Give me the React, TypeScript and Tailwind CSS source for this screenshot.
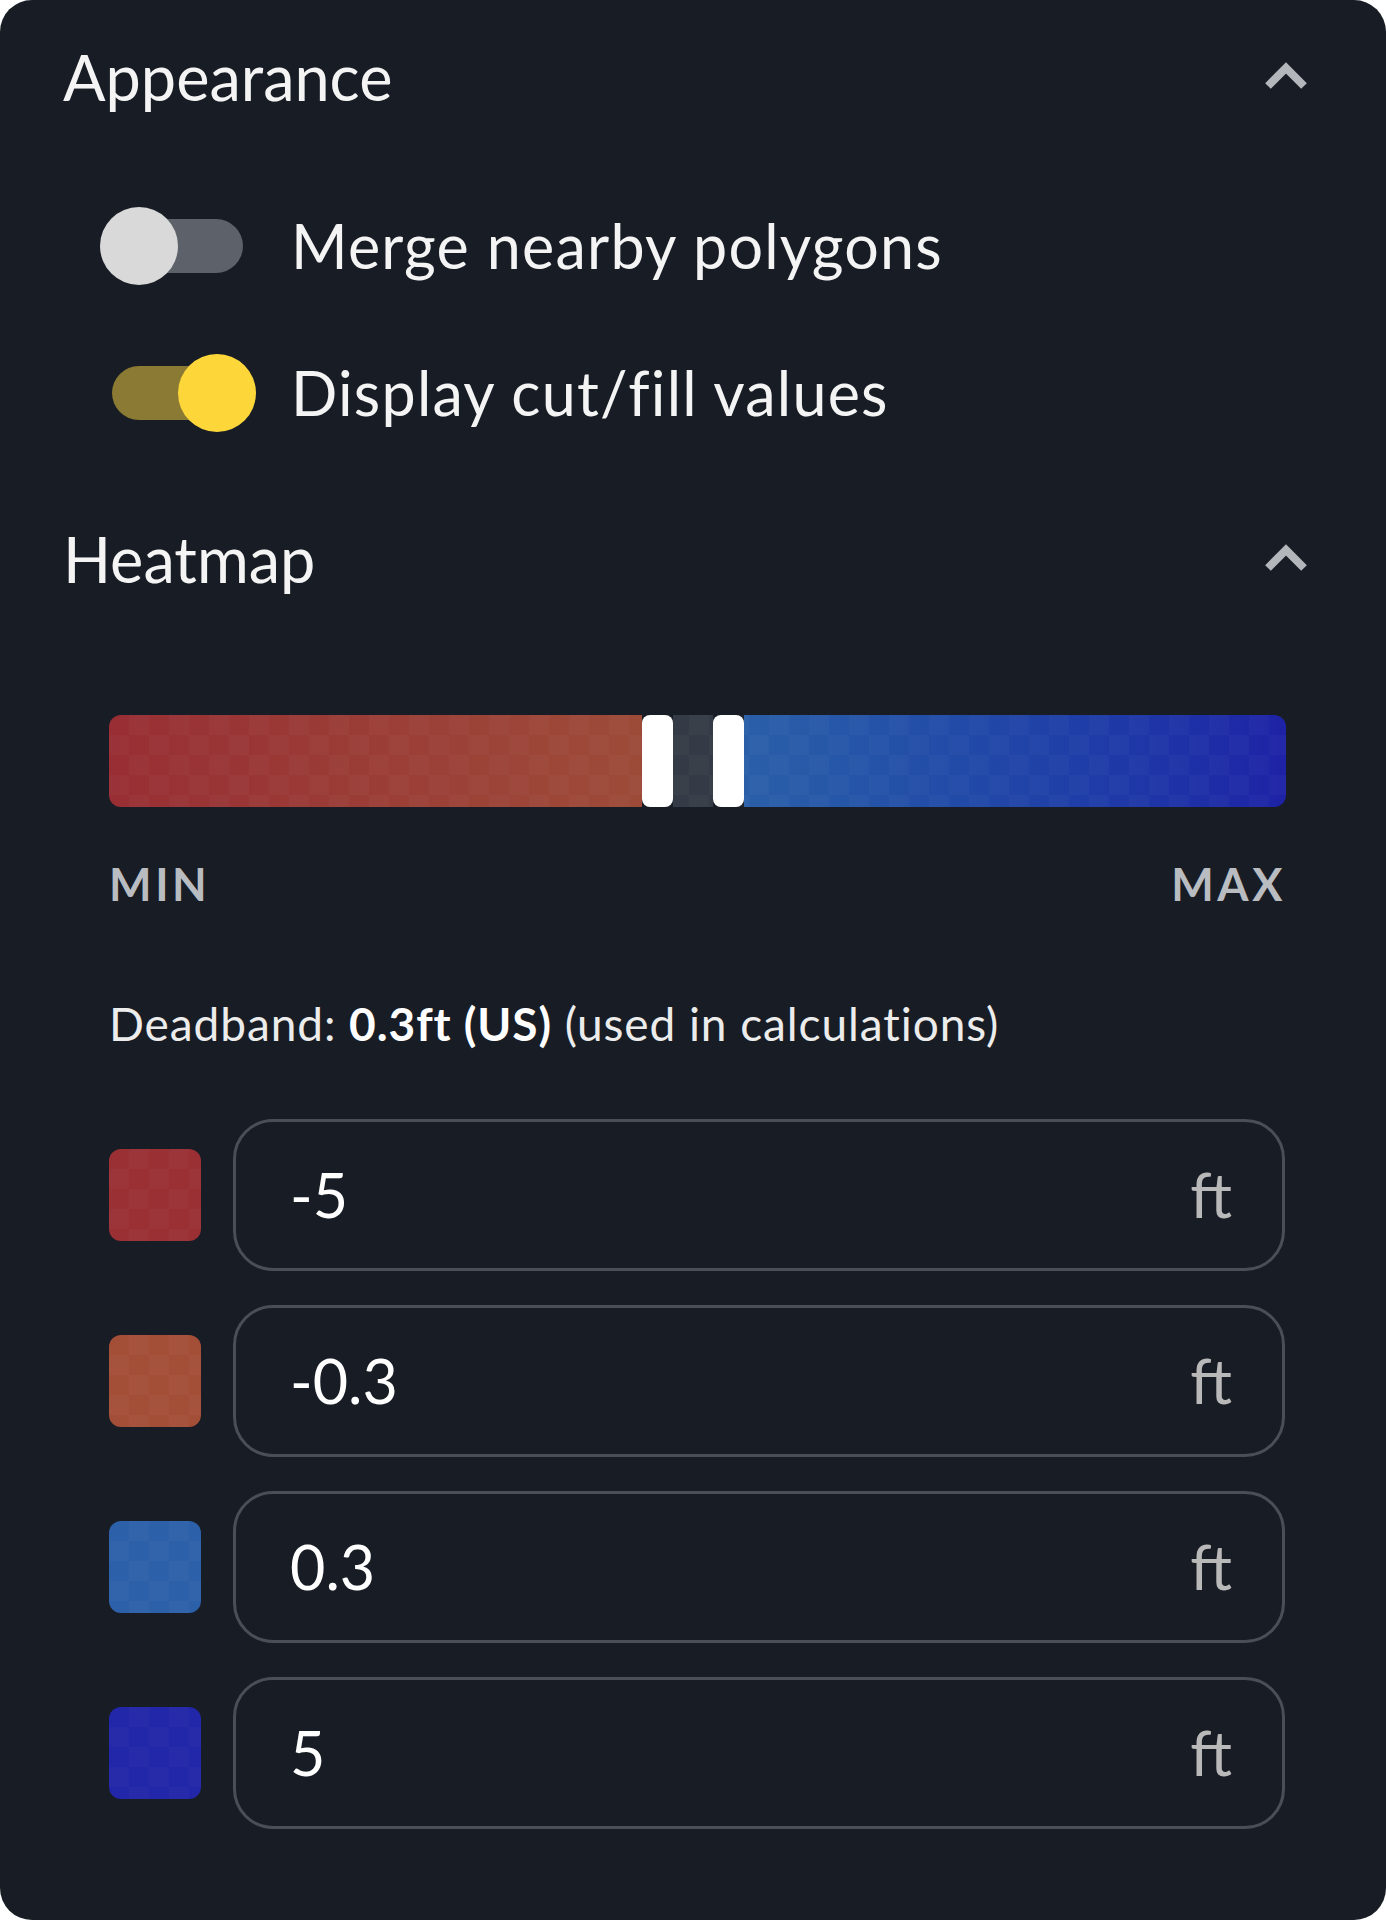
import React from 'react';

const Checker: React.FC = () => (
  <div className="pointer-events-none absolute inset-0 bg-[image:repeating-conic-gradient(rgba(255,255,255,0.025)_0%_25%,transparent_0%_50%)] bg-[length:40px_40px]" />
);

const Chevron: React.FC = () => (
  <svg width="48" height="32" viewBox="0 0 48 32" fill="none" className="shrink-0">
    <polyline points="6,25 24,7 42,25" stroke="#b3b6bb" strokeWidth="8" strokeLinecap="butt" strokeLinejoin="miter" />
  </svg>
);

const Toggle: React.FC<{ on: boolean }> = ({ on }) => (
  <div className="relative w-[156px] h-[78px] shrink-0">
    <div className={`absolute left-[12px] top-[12px] w-[131px] h-[54px] rounded-full ${on ? 'bg-[#8a7a33]' : 'bg-[#5d616a]'}`} />
    <div className={`absolute top-0 w-[78px] h-[78px] rounded-full ${on ? 'left-[78px] bg-[#fdd73a]' : 'left-0 bg-[#d9d9d9]'}`} />
  </div>
);

const SectionHeader: React.FC<{ title: string }> = ({ title }) => (
  <div className="flex items-center justify-between h-[74px] pl-[63px] pr-[76px]">
    <span className="text-[63px] leading-[74px] text-[#f4f4f4]">{title}</span>
    <Chevron />
  </div>
);

const stops = [
  { value: '-5', color: 'bg-[#9a3034]' },
  { value: '-0.3', color: 'bg-[#a34f38]' },
  { value: '0.3', color: 'bg-[#2c60a8]' },
  { value: '5', color: 'bg-[#2226a8]' },
];

const App: React.FC = () => {
  return (
    <div className="w-[1386px] h-[1920px] bg-white font-['Lato',sans-serif]">
      <div className="w-full h-full rounded-[32px] bg-[#181d25] pt-[40px] flex flex-col">
        <SectionHeader title="Appearance" />

        <div className="mt-[93px] pl-[100px] flex flex-col gap-[69px]">
          <div className="flex items-center gap-[35px]">
            <Toggle on={false} />
            <span className="text-[61px] leading-[78px] tracking-[0.02em] text-[#f4f4f4]">Merge nearby polygons</span>
          </div>
          <div className="flex items-center gap-[35px]">
            <Toggle on={true} />
            <span className="text-[61px] leading-[78px] tracking-[0.02em] text-[#f4f4f4]">Display cut/fill values</span>
          </div>
        </div>

        <div className="mt-[90px]">
          <SectionHeader title="Heatmap" />
        </div>

        <div className="pl-[109px] pr-[100px] flex flex-col">
          <div className="mt-[119px] relative h-[92px] flex rounded-[12px] overflow-hidden">
            <div className="w-[533px] bg-gradient-to-r from-[#982e34] to-[#9d4b39]" />
            <div className="w-[31px] bg-white rounded-[8px]" />
            <div className="w-[40px] bg-[#343b46]" />
            <div className="w-[31px] bg-white rounded-[8px]" />
            <div className="flex-1 bg-gradient-to-r from-[#2a5fa8] to-[#1e22a6]" />
            <Checker />
          </div>

          <div className="mt-[51px] flex justify-between text-[45px] leading-[52px] font-bold tracking-[0.08em] text-[#b9bcc1]">
            <span>MIN</span>
            <span>MAX</span>
          </div>

          <div className="mt-[87px] text-[46px] leading-[54px] tracking-[0.02em] text-[#ececec]">
            Deadband: <span className="font-bold text-white">0.3ft (US)</span> (used in calculations)
          </div>

          <div className="mt-[68px] flex flex-col gap-[34px] pr-[1px]">
            {stops.map((s) => (
              <div key={s.value} className="flex items-center gap-[32px]">
                <div className={`relative w-[92px] h-[92px] shrink-0 rounded-[12px] overflow-hidden ${s.color}`}>
                  <Checker />
                </div>
                <div className="flex-1 h-[152px] rounded-[40px] border-[3px] border-[#4a4f57] flex items-center justify-between pl-[54px] pr-[50px]">
                  <span className="text-[61px] text-white">{s.value}</span>
                  <span className="text-[61px] text-[#b9b9b9]">ft</span>
                </div>
              </div>
            ))}
          </div>
        </div>
      </div>
    </div>
  );
};

export default App;
